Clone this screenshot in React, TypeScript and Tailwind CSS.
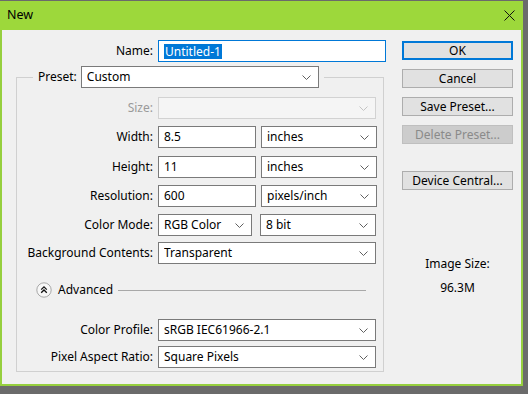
import React from 'react';

const Chevron = ({ muted = false }: { muted?: boolean }) => (
  <svg width="9" height="5" viewBox="0 0 9 5" className="shrink-0">
    <path d="M0.5 0.5 L4.5 4.5 L8.5 0.5" fill="none" stroke={muted ? '#c4c4c4' : '#606060'} strokeWidth="1" />
  </svg>
);

const Select = ({ value, width, disabled = false, className = '' }: { value: string; width: string; disabled?: boolean; className?: string }) => (
  <div
    className={`flex items-center h-[22px] pl-[5px] pr-[7px] border ${width} ${
      disabled ? 'bg-[#f5f5f5] border-[#d2d2d2]' : 'bg-white border-[#7a7a7a]'
    } ${className}`}
  >
    <span className="flex-1 truncate">{value}</span>
    <Chevron muted={disabled} />
  </div>
);

const TextInput = ({ value }: { value: string }) => (
  <div className="flex items-center h-[22px] w-[98px] pl-[5px] border border-[#7a7a7a] bg-white">{value}</div>
);

const Row = ({ label, muted = false, className = '', children }: { label: string; muted?: boolean; className?: string; children: React.ReactNode }) => (
  <div className={`flex items-center ${className}`}>
    <label className={`w-[136px] text-right ${muted ? 'text-[#9a9a9a]' : ''}`}>{label}</label>
    <div className="ml-[5px] flex gap-[5px]">{children}</div>
  </div>
);

const Button = ({ label, primary = false, disabled = false, className = '' }: { label: string; primary?: boolean; disabled?: boolean; className?: string }) => (
  <button
    className={`w-[111px] h-[19px] flex items-center justify-center leading-none ${
      primary ? 'border-2 border-[#0078d7] bg-[#e1e1e1]' : disabled ? 'border border-[#bfbfbf] bg-[#cccccc] text-[#8a8a8a]' : 'border border-[#adadad] bg-[#e1e1e1]'
    } ${className}`}
  >
    {label}
  </button>
);

export default function App() {
  return (
    <div className="w-[528px] h-[394px] bg-[#6b6b6b] pt-px font-['Noto_Sans',sans-serif] text-[12px] text-black">
      <div className="w-[523px] h-[385px] flex flex-col bg-[#96cf3e]">
        <div className="h-[29px] flex items-center justify-between pl-[7px] pr-[8px] bg-[#9dd83b]">
          <span className="text-[12.5px]">New</span>
          <svg width="11" height="11" viewBox="0 0 11 11">
            <path d="M0.5 0.5 L10.5 10.5 M10.5 0.5 L0.5 10.5" stroke="#111" strokeWidth="1" />
          </svg>
        </div>

        <div className="flex-1 mx-[2px] mb-[2px] bg-[#f0f0f0] flex">
          <div className="w-[386px] pt-[10px]">
            <div className="flex items-center">
              <label className="w-[151px] text-right">Name:</label>
              <div className="ml-[5px] w-[228px] h-[22px] flex items-center pl-[5px] border border-[#0078d7] bg-white">
                <span className="bg-[#0078d7] text-white px-px leading-[15px]">Untitled-1</span>
              </div>
            </div>

            <fieldset className="ml-[14px] mt-[4px] w-[368px] border border-[#d0d0d0] pb-[3px]">
              <legend className="ml-[16px] px-[5px] flex items-center gap-[4px]">
                <span>Preset:</span>
                <Select value="Custom" width="w-[238px]" />
              </legend>

              <Row label="Size:" muted className="mt-[9px]">
                <Select value="" width="w-[218px]" disabled />
              </Row>
              <Row label="Width:" className="mt-[7px]">
                <TextInput value="8.5" />
                <Select value="inches" width="w-[116px]" />
              </Row>
              <Row label="Height:" className="mt-[8px]">
                <TextInput value="11" />
                <Select value="inches" width="w-[116px]" />
              </Row>
              <Row label="Resolution:" className="mt-[7px]">
                <TextInput value="600" />
                <Select value="pixels/inch" width="w-[116px]" />
              </Row>
              <Row label="Color Mode:" className="mt-[7px]">
                <Select value="RGB Color" width="w-[94px]" />
                <Select value="8 bit" width="w-[116px]" className="ml-[3px]" />
              </Row>
              <Row label="Background Contents:" className="mt-[6px]">
                <Select value="Transparent" width="w-[218px]" />
              </Row>

              <div className="flex items-center mt-[18px] ml-[19px] mr-[17px] h-[16px]">
                <svg width="16" height="16" viewBox="0 0 16 16" className="shrink-0">
                  <circle cx="8" cy="8" r="7.2" fill="#f7f7f7" stroke="#a8a8a8" strokeWidth="1" />
                  <path d="M5.2 7.6 L8 4.8 L10.8 7.6 M5.2 10.8 L8 8 L10.8 10.8" fill="none" stroke="#111" strokeWidth="1.3" />
                </svg>
                <span className="ml-[6px]">Advanced</span>
                <div className="flex-1 ml-[5px] h-px bg-[#a8a8a8]" />
              </div>

              <Row label="Color Profile:" className="mt-[21px]">
                <Select value="sRGB IEC61966-2.1" width="w-[218px]" />
              </Row>
              <Row label="Pixel Aspect Ratio:" className="mt-[5px]">
                <Select value="Square Pixels" width="w-[218px]" />
              </Row>
            </fieldset>
          </div>

          <div className="ml-[14px] pt-[11px] flex flex-col">
            <Button label="OK" primary />
            <Button label="Cancel" className="mt-[9px]" />
            <Button label="Save Preset..." className="mt-[9px]" />
            <Button label="Delete Preset..." disabled className="mt-[9px]" />
            <Button label="Device Central..." className="mt-[27px]" />
            <div className="mt-[66px] w-[111px] text-center leading-[16px]">Image Size:</div>
            <div className="mt-[8px] w-[111px] text-center leading-[16px]">96.3M</div>
          </div>
        </div>
      </div>
    </div>
  );
}
